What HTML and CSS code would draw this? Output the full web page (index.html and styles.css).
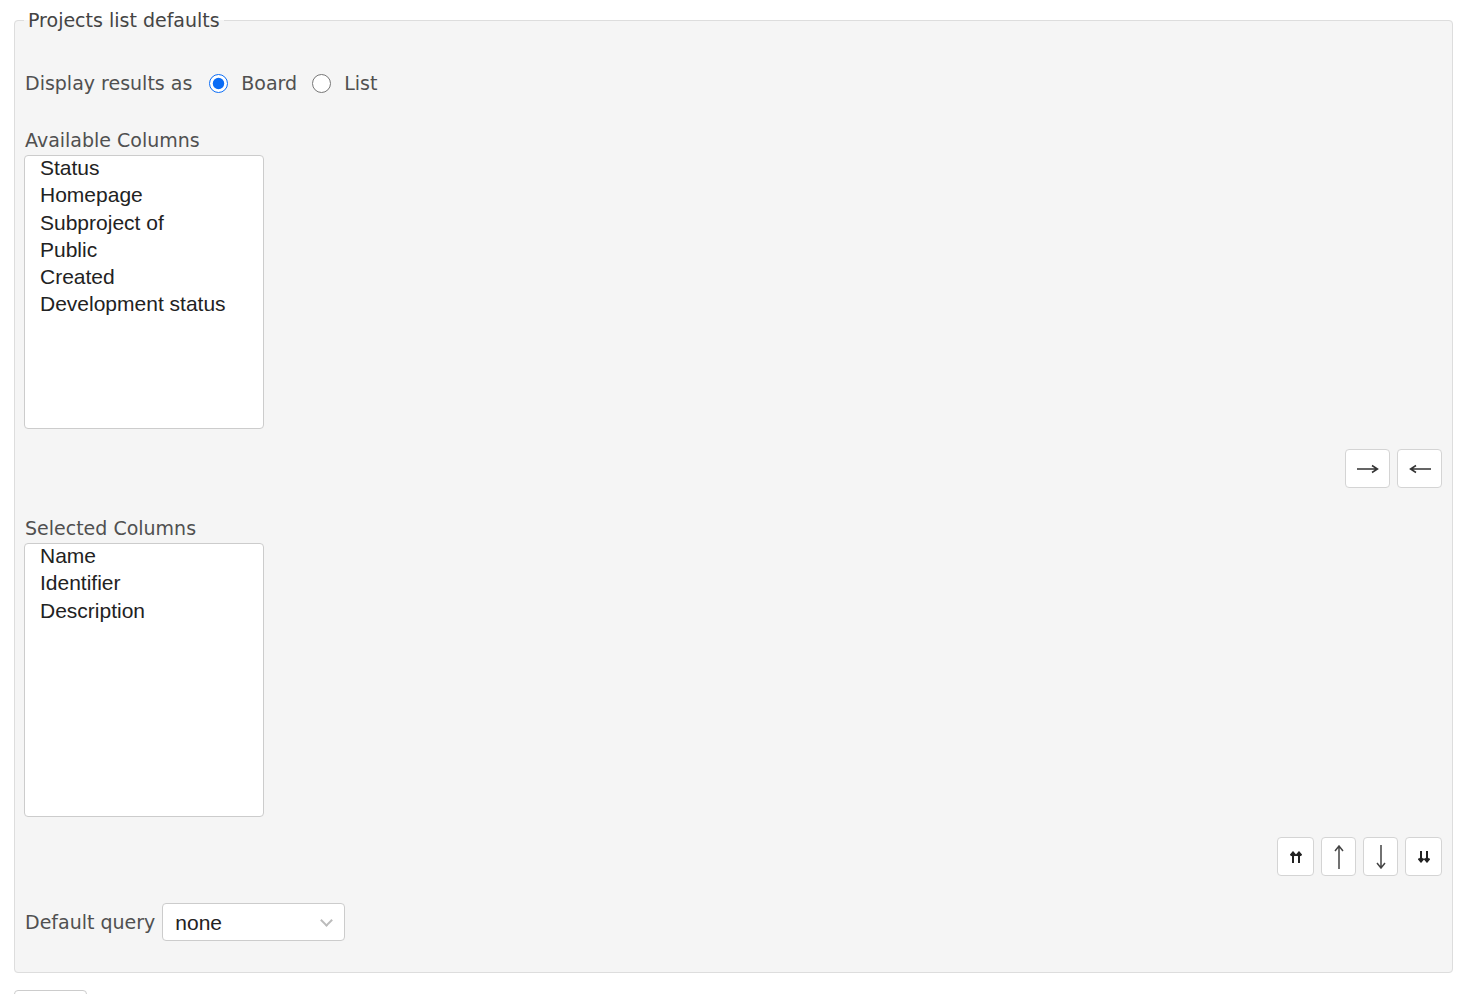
FILE: index.html
```html
<!DOCTYPE html>
<html lang="en">
<head>
    <meta charset="UTF-8">
    <title>Projects list defaults</title>
    <link rel="stylesheet" href="styles.css">
</head>
<body>

    <fieldset class="box">
        <legend>Projects list defaults</legend>

        <p class="display-row">
            <span class="label">Display results as</span>
            <label class="radio"><input type="radio" name="display" checked> Board</label>
            <label class="radio"><input type="radio" name="display"> List</label>
        </p>

        <div class="columns-block">
            <div class="label col-title">Available Columns</div>
            <select class="listbox" multiple size="10">
                <option>Status</option>
                <option>Homepage</option>
                <option>Subproject of</option>
                <option>Public</option>
                <option>Created</option>
                <option>Development status</option>
            </select>
            <div class="buttons">
                <button class="small-btn wide" title="Add">
                    <svg width="22" height="10" viewBox="0 0 22 10"><path d="M0 5H20M15 1.5L20.5 5L15 8.5" fill="none" stroke="#333" stroke-width="1.5"/></svg>
                </button>
                <button class="small-btn wide" title="Remove">
                    <svg width="22" height="10" viewBox="0 0 22 10"><path d="M22 5H2M7 1.5L1.5 5L7 8.5" fill="none" stroke="#333" stroke-width="1.5"/></svg>
                </button>
            </div>
        </div>

        <div class="columns-block second">
            <div class="label col-title">Selected Columns</div>
            <select class="listbox" multiple size="10">
                <option>Name</option>
                <option>Identifier</option>
                <option>Description</option>
            </select>
            <div class="buttons">
                <button class="small-btn" title="Move to top">
                    <svg width="12" height="12" viewBox="0 0 12 12"><path d="M3 12V2M0.5 4.5L3 1.5L5.5 4.5M9 12V2M6.5 4.5L9 1.5L11.5 4.5" fill="none" stroke="#222" stroke-width="2"/></svg>
                </button>
                <button class="small-btn narrow" title="Move up">
                    <svg width="10" height="24" viewBox="0 0 10 24"><path d="M5 24V1.5M1 6L5 1L9 6" fill="none" stroke="#444" stroke-width="1.5"/></svg>
                </button>
                <button class="small-btn narrow" title="Move down">
                    <svg width="10" height="24" viewBox="0 0 10 24"><path d="M5 0V22.5M1 18L5 23L9 18" fill="none" stroke="#444" stroke-width="1.5"/></svg>
                </button>
                <button class="small-btn" title="Move to bottom">
                    <svg width="12" height="12" viewBox="0 0 12 12"><path d="M3 0V10M0.5 7.5L3 10.5L5.5 7.5M9 0V10M6.5 7.5L9 10.5L11.5 7.5" fill="none" stroke="#222" stroke-width="2"/></svg>
                </button>
            </div>
        </div>

        <p class="query-row">
            <span class="label">Default query</span>
            <span class="select-wrap">
                <select class="query-select">
                    <option>none</option>
                </select>
            </span>
        </p>
    </fieldset>

    <button class="save-btn">Save</button>

</body>
</html>
```

FILE: styles.css
```css
body {
    margin: 0;
    padding: 0 17px 0 14px;
    background: #fff;
    font-family: 'DejaVu Sans', Verdana, sans-serif;
    font-size: 19px;
    color: #505050;
}

.box {
    margin: 9px 0 0 0;
    padding: 0 10px 31px 10px;
    background-color: #f5f5f5;
    border: 1px solid #dddddd;
    border-radius: 4px;
    box-sizing: border-box;
}

legend {
    padding: 0 4px;
    margin-left: -1px;
    font-size: 19px;
    color: #444;
}

.display-row {
    display: flex;
    align-items: center;
    height: 30px;
    margin: 37px 0 0 0;
}

.label {
    color: #505050;
}

.radio {
    display: flex;
    align-items: center;
    margin-left: 17px;
}

.radio input {
    width: 19px;
    height: 19px;
    margin: 0 13px 0 0;
    accent-color: #0a6cf5;
}

.radio + .radio {
    margin-left: 15px;
}

.columns-block {
    margin-top: 27px;
}

.columns-block.second {
    margin-top: 25px;
}

.col-title {
    height: 30px;
    line-height: 30px;
}

.listbox {
    display: block;
    width: 240px;
    height: 274px;
    margin: 0 0 0 -1px;
    padding: 0 0 0 15px;
    background: #fff;
    border: 1px solid #cccccc;
    border-radius: 4px;
    font-family: 'Liberation Sans', Arial, sans-serif;
    font-size: 21px;
    color: #222;
    box-sizing: border-box;
    overflow: hidden;
}

.listbox option {
    height: 27.3px;
    line-height: 27px;
    padding: 0;
}

.buttons {
    display: flex;
    justify-content: flex-end;
    gap: 7px;
    margin-top: 20px;
}

.small-btn {
    display: flex;
    align-items: center;
    justify-content: center;
    width: 37px;
    height: 39px;
    padding: 0;
    background: #fff;
    border: 1px solid #d4d4d4;
    border-radius: 4px;
    cursor: pointer;
}

.small-btn.narrow {
    width: 35px;
}

.small-btn.wide {
    width: 45px;
}

.query-row {
    display: flex;
    align-items: center;
    margin: 27px 0 0 0;
}

.select-wrap {
    position: relative;
    margin-left: 7px;
}

.query-select {
    display: block;
    appearance: none;
    width: 183px;
    height: 38px;
    padding: 0 0 0 12px;
    background: #fff;
    border: 1px solid #cccccc;
    border-radius: 4px;
    font-family: 'Liberation Sans', Arial, sans-serif;
    font-size: 21px;
    color: #222;
}

.select-wrap::after {
    content: '';
    position: absolute;
    right: 14px;
    top: 13px;
    width: 7px;
    height: 7px;
    border-right: 2px solid #bbb;
    border-bottom: 2px solid #bbb;
    transform: rotate(45deg);
    pointer-events: none;
}

.save-btn {
    margin-top: 17px;
    padding: 6px 12px;
    background: #fff;
    border: 1px solid #cccccc;
    border-radius: 4px;
    font-family: 'DejaVu Sans', sans-serif;
    font-size: 19px;
}
```
